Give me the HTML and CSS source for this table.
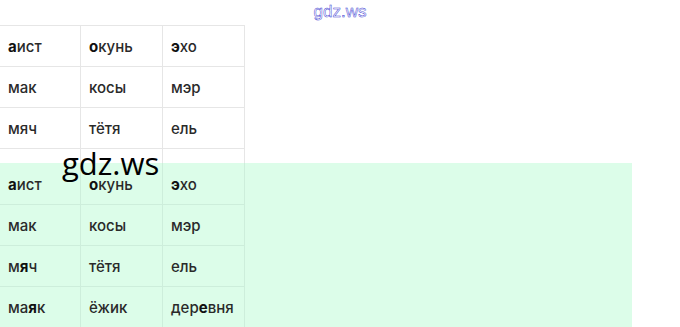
FILE: index.html
```html
<!DOCTYPE html>
<html lang="ru">
<head>
<meta charset="utf-8">
<link rel="stylesheet" href="styles.css">
</head>
<body>
<div class="page">
  <div class="brand">gdz.ws</div>
  <table class="grid">
    <tr><td><b>а</b>ист</td><td><b>о</b>кунь</td><td><b>э</b>хо</td></tr>
    <tr><td>мак</td><td>косы</td><td>мэр</td></tr>
    <tr><td>мяч</td><td>тётя</td><td>ель</td></tr>
    <tr class="stub"><td></td><td></td><td></td></tr>
  </table>
  <div class="green">
    <table class="grid g">
      <tr><td><b>а</b>ист</td><td><b>о</b>кунь</td><td><b>э</b>хо</td></tr>
      <tr><td>мак</td><td>косы</td><td>мэр</td></tr>
      <tr><td>м<b>я</b>ч</td><td>тётя</td><td>ель</td></tr>
      <tr><td>ма<b>я</b>к</td><td>ёжик</td><td>дер<b>е</b>вня</td></tr>
    </table>
  </div>
  <div class="mark">gdz.ws</div>
</div>
</body>
</html>
```
FILE: styles.css
```css
html, body { margin: 0; padding: 0; background: #fff; }
.page { position: relative; width: 680px; height: 327px; overflow: hidden; }
.brand {
  height: 25px;
  text-align: center;
  font-family: "Liberation Sans", Arial, sans-serif;
  font-size: 17px;
  line-height: 24px;
  color: #fff;
  -webkit-text-stroke: 0.45px #2f2fd0;
}
.grid { border-collapse: collapse; font-family: Inter, "Noto Sans", sans-serif; font-size: 15px; font-weight: 500; color: #2a2a2a; }
.grid td {
  width: 72px; height: 40px; padding: 0 0 0 8px;
  border: 1px solid #e6e6e6; vertical-align: middle;
}
.grid td + td { width: 73px; }
.grid td b { font-weight: 700; color: #111; }
.grid td:first-child { border-left: none; }
.grid tr.stub td { height: 14px; border-bottom: none; }
.green { width: 632px; height: 164px; background: #dcfde9; }
.grid.g td { border-color: #cdeedb; }
.grid.g tr:first-child td { border-top-color: #dcfde9; }
.grid.g tr:last-child td { border-bottom: none; }
.mark {
  position: absolute; left: 62px; top: 143px;
  font-family: "Open Sans", sans-serif; font-size: 31px; color: #000;
  line-height: 40px;
}
```
